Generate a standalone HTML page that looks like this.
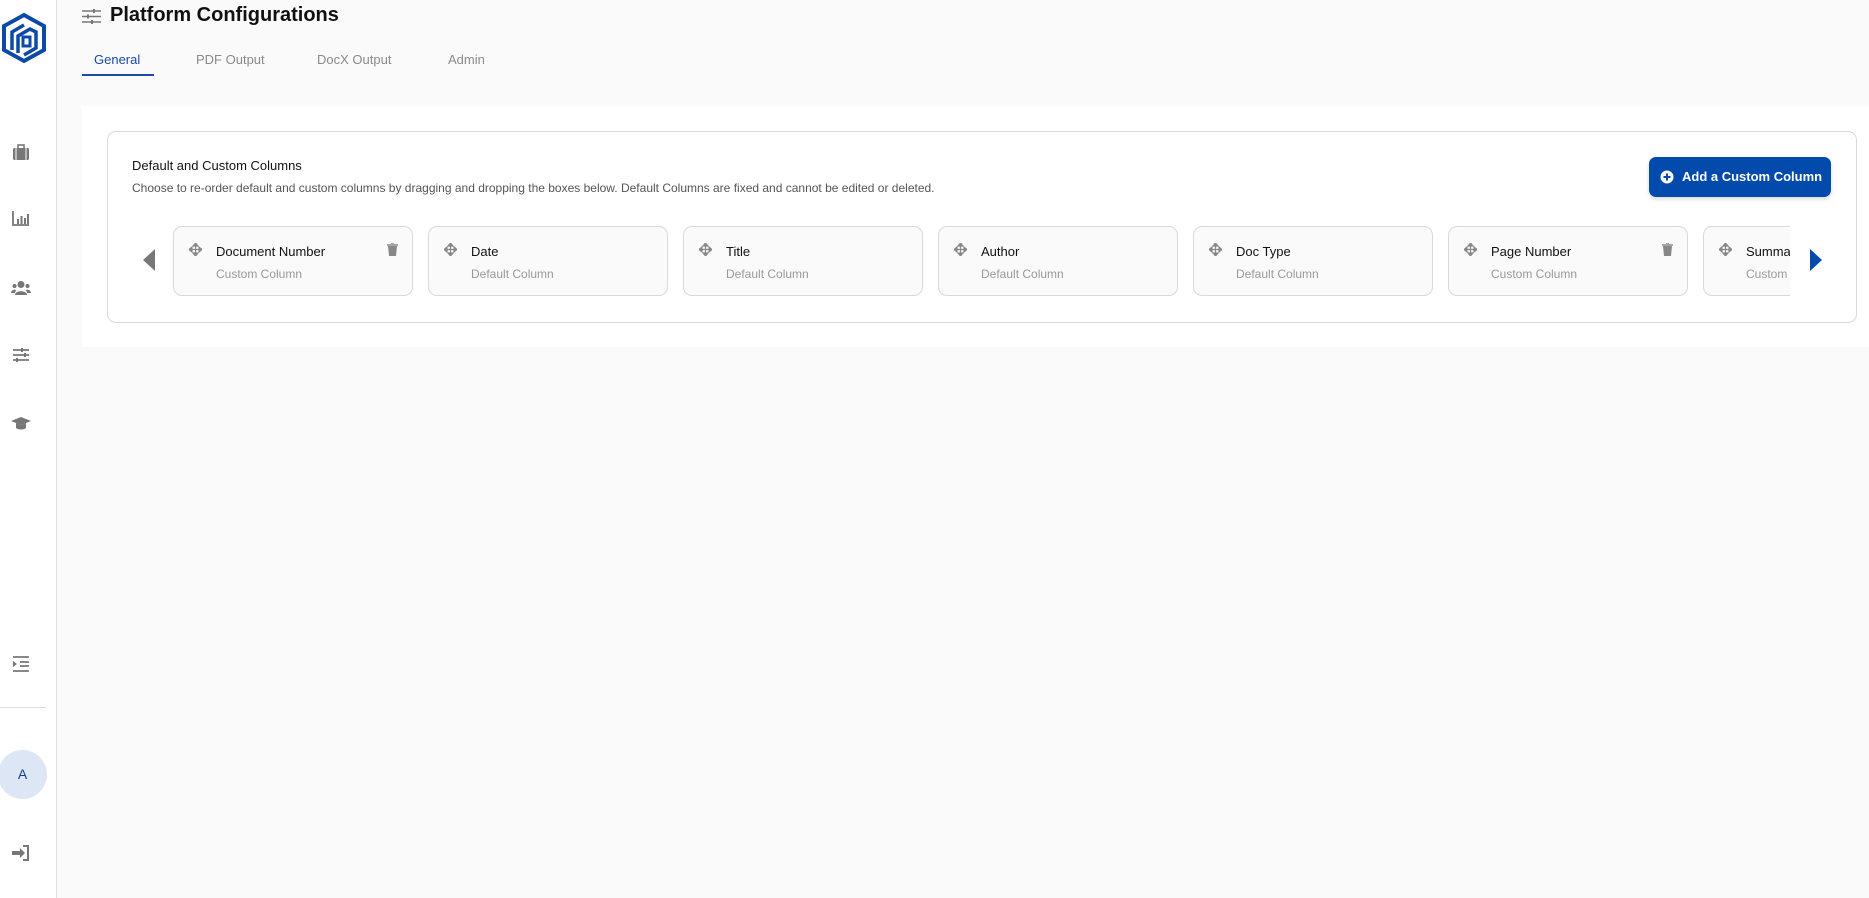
<!DOCTYPE html>
<html><head><meta charset="utf-8"><style>
*{box-sizing:border-box;margin:0;padding:0}
body{width:1869px;height:898px;background:#fafafa;font-family:"Liberation Sans",sans-serif;position:relative;overflow:hidden;color:#111}
.side{position:absolute;left:0;top:0;width:57px;height:898px;background:#fff;border-right:1px solid #e0e0e0}
.ic{position:absolute;left:11px;width:20px;height:20px}
.abs{position:absolute}
.tab{position:absolute;top:52px;font-size:13px;color:#8a8a8a}
.panel{position:absolute;left:82px;top:106px;width:1787px;height:241px;background:#fff}
.card{position:absolute;left:107px;top:131px;width:1750px;height:192px;border:1px solid #d9d9d9;border-radius:9px;background:#fff}
.box{position:absolute;top:226px;width:240px;height:70px;border:1px solid #d9d9d9;border-radius:9px;background:#fafafa}
.box .t{position:absolute;left:42px;top:17px;font-size:13px;color:#111}
.box .s{position:absolute;left:42px;top:40px;font-size:12px;color:#999}
.box svg.mv{position:absolute;left:15px;top:16px}
.box svg.tr{position:absolute;right:14px;top:16px}
</style></head><body>
<div class="side">
<svg class="abs" style="left:1px;top:12px" width="46" height="52" viewBox="0 0 46 52"><path d="M23 3 L43 14 L43 38 L23 49 L3 38 L3 14 Z" fill="none" stroke="#0d4aa8" stroke-width="4"/><path d="M11 38 V20 L23 13 M17 41 V24 L29 17 L35 20 V36 L23 43" fill="none" stroke="#0d4aa8" stroke-width="3.5"/><rect x="22" y="25" width="7" height="9" fill="none" stroke="#0d4aa8" stroke-width="3"/></svg>
<svg class="ic" style="top:143px" viewBox="0 0 20 20"><rect x="2" y="5" width="16" height="12" rx="1.5" fill="#777"/><rect x="7" y="2" width="6" height="4" fill="none" stroke="#777" stroke-width="1.6"/><path d="M5 5v12M15 5v12" stroke="#fff" stroke-width="1"/></svg>
<svg class="ic" style="top:208px" viewBox="0 0 20 20"><path d="M2 3v14h16" fill="none" stroke="#777" stroke-width="1.8"/><rect x="6" y="11" width="2" height="5" fill="#777"/><rect x="9.5" y="8" width="2" height="8" fill="#777"/><rect x="13" y="10" width="2" height="6" fill="#777"/><rect x="16" y="6" width="2" height="10" fill="#777"/></svg>
<svg class="ic" style="top:278px" viewBox="0 0 20 20"><circle cx="10" cy="6.5" r="3.5" fill="#777"/><path d="M4 17c0-5 12-5 12 0z" fill="#777"/><circle cx="3.5" cy="8" r="2" fill="#777"/><circle cx="16.5" cy="8" r="2" fill="#777"/><path d="M0 15c0-3 4-4 5-3l-1 3zM20 15c0-3-4-4-5-3l1 3z" fill="#777"/></svg>
<svg class="ic" style="top:345px" viewBox="0 0 20 20"><path d="M2 5h16M2 10h16M2 15h16" stroke="#777" stroke-width="1.8"/><path d="M11 3v4M14 8v4M6 13v4" stroke="#777" stroke-width="2"/></svg>
<svg class="ic" style="top:413px" viewBox="0 0 20 20"><path d="M0 8l10-4 10 4-10 4z" fill="#777"/><path d="M5 10v5c2 2 8 2 10 0v-5l-5 2z" fill="#777"/></svg>
<svg class="ic" style="top:654px" viewBox="0 0 20 20"><path d="M2 3h16M9 8h9M9 12h9M2 17h16" stroke="#777" stroke-width="1.8"/><path d="M2 7l4 3-4 3z" fill="#777"/></svg>
<div class="abs" style="left:0;top:707px;width:46px;height:1px;background:#ddd"></div>
<div class="abs" style="left:-2px;top:750px;width:49px;height:49px;border-radius:50%;background:#dde6f5;color:#1a3f8a;font-size:14px;text-align:center;line-height:49px">A</div>
<svg class="ic" style="top:843px" viewBox="0 0 20 20"><path d="M1 8h8V5l5 5-5 5v-3H1z" fill="#777"/><path d="M12 3h5v14h-5" fill="none" stroke="#777" stroke-width="2"/></svg>
</div>
<svg class="abs" style="left:82px;top:8px" width="19" height="17" viewBox="0 0 19 17"><path d="M0 3h19M0 8.5h19M0 14h19" stroke="#777" stroke-width="1.6"/><path d="M12 1v4M6 6.5v4M10 12v4" stroke="#777" stroke-width="2"/></svg>
<div class="abs" style="left:110px;top:4px;font-size:20px;font-weight:bold;color:#111">Platform Configurations</div>
<div class="tab" style="left:94px;color:#1b4aa6">General</div>
<div class="tab" style="left:196px">PDF Output</div>
<div class="tab" style="left:317px">DocX Output</div>
<div class="tab" style="left:448px">Admin</div>
<div class="abs" style="left:82px;top:74px;width:72px;height:2px;background:#1b4aa6"></div>
<div class="panel"></div>
<div class="card"></div>
<div class="abs" style="left:132px;top:158px;font-size:13px;color:#111">Default and Custom Columns</div>
<div class="abs" style="left:132px;top:181px;font-size:12px;color:#555">Choose to re-order default and custom columns by dragging and dropping the boxes below. Default Columns are fixed and cannot be edited or deleted.</div>
<div class="abs" style="left:1649px;top:157px;width:182px;height:40px;background:#034aad;border-radius:7px;box-shadow:0 2px 4px rgba(0,0,0,.15);color:#fff;font-weight:bold;font-size:13px;line-height:40px;padding-left:33px">Add a Custom Column</div>
<svg class="abs" style="left:1660px;top:170px" width="14" height="14" viewBox="0 0 14 14"><circle cx="7" cy="7" r="6.5" fill="#fff"/><path d="M7 3.5v7M3.5 7h7" stroke="#034aad" stroke-width="2"/></svg>
<svg class="abs" style="left:143px;top:249px" width="13" height="22" viewBox="0 0 13 22"><path d="M12 0v22L0 11z" fill="#777"/></svg>
<svg class="abs" style="left:1810px;top:249px" width="12" height="22" viewBox="0 0 12 22"><path d="M0 0v22L12 11z" fill="#034aad"/></svg>
<div class="abs" style="left:170px;top:220px;width:1620px;height:90px;overflow:hidden">
<div style="position:relative;left:-170px;top:-220px">
<div class="box" style="left:173px"><svg class="mv" width="13" height="13" viewBox="0 0 13 13"><path d="M6.5 0L4 3h5zM6.5 13L4 10h5zM0 6.5L3 4v5zM13 6.5L10 4v5zM6.5 2v9M2 6.5h9" fill="#888" stroke="#888" stroke-width="1.2"/></svg><div class="t">Document Number</div><div class="s">Custom Column</div><svg class="tr" width="11" height="13" viewBox="0 0 11 13"><path d="M0 2h11M4 0h3" stroke="#888" stroke-width="1.5"/><path d="M1 3h9l-1 10H2z" fill="#888"/></svg></div>
<div class="box" style="left:428px"><svg class="mv" width="13" height="13" viewBox="0 0 13 13"><path d="M6.5 0L4 3h5zM6.5 13L4 10h5zM0 6.5L3 4v5zM13 6.5L10 4v5zM6.5 2v9M2 6.5h9" fill="#888" stroke="#888" stroke-width="1.2"/></svg><div class="t">Date</div><div class="s">Default Column</div></div>
<div class="box" style="left:683px"><svg class="mv" width="13" height="13" viewBox="0 0 13 13"><path d="M6.5 0L4 3h5zM6.5 13L4 10h5zM0 6.5L3 4v5zM13 6.5L10 4v5zM6.5 2v9M2 6.5h9" fill="#888" stroke="#888" stroke-width="1.2"/></svg><div class="t">Title</div><div class="s">Default Column</div></div>
<div class="box" style="left:938px"><svg class="mv" width="13" height="13" viewBox="0 0 13 13"><path d="M6.5 0L4 3h5zM6.5 13L4 10h5zM0 6.5L3 4v5zM13 6.5L10 4v5zM6.5 2v9M2 6.5h9" fill="#888" stroke="#888" stroke-width="1.2"/></svg><div class="t">Author</div><div class="s">Default Column</div></div>
<div class="box" style="left:1193px"><svg class="mv" width="13" height="13" viewBox="0 0 13 13"><path d="M6.5 0L4 3h5zM6.5 13L4 10h5zM0 6.5L3 4v5zM13 6.5L10 4v5zM6.5 2v9M2 6.5h9" fill="#888" stroke="#888" stroke-width="1.2"/></svg><div class="t">Doc Type</div><div class="s">Default Column</div></div>
<div class="box" style="left:1448px"><svg class="mv" width="13" height="13" viewBox="0 0 13 13"><path d="M6.5 0L4 3h5zM6.5 13L4 10h5zM0 6.5L3 4v5zM13 6.5L10 4v5zM6.5 2v9M2 6.5h9" fill="#888" stroke="#888" stroke-width="1.2"/></svg><div class="t">Page Number</div><div class="s">Custom Column</div><svg class="tr" width="11" height="13" viewBox="0 0 11 13"><path d="M0 2h11M4 0h3" stroke="#888" stroke-width="1.5"/><path d="M1 3h9l-1 10H2z" fill="#888"/></svg></div>
<div class="box" style="left:1703px"><svg class="mv" width="13" height="13" viewBox="0 0 13 13"><path d="M6.5 0L4 3h5zM6.5 13L4 10h5zM0 6.5L3 4v5zM13 6.5L10 4v5zM6.5 2v9M2 6.5h9" fill="#888" stroke="#888" stroke-width="1.2"/></svg><div class="t">Summary</div><div class="s">Custom Column</div></div>
</div></div>
</body></html>
